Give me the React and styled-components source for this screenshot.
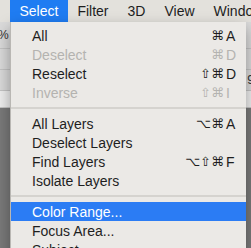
import React from "react"
import styled, { createGlobalStyle } from "styled-components"

const GlobalStyle = createGlobalStyle`
  html, body {
    margin: 0;
    padding: 0;
    width: 251px;
    height: 248px;
    overflow: hidden;
    background: #7a7a7a;
    font-family: "Liberation Sans", Arial, sans-serif;
  }
`

const topItems = ["Select", "Filter", "3D", "View", "Window"]

const groups = [
  [
    { label: "All", mods: "⌘", key: "A" },
    { label: "Deselect", mods: "⌘", key: "D", disabled: true },
    { label: "Reselect", mods: "⇧⌘", key: "D" },
    { label: "Inverse", mods: "⇧⌘", key: "I", disabled: true },
  ],
  [
    { label: "All Layers", mods: "⌥⌘", key: "A" },
    { label: "Deselect Layers" },
    { label: "Find Layers", mods: "⌥⇧⌘", key: "F" },
    { label: "Isolate Layers" },
  ],
  [
    { label: "Color Range...", active: true },
    { label: "Focus Area..." },
    { label: "Subject" },
  ],
]

const App = () => (
  <Screen>
    <GlobalStyle />
    <MenuBar>
      {topItems.map((t, i) => (
        <MenuTitle key={t} active={i === 0}>{t}</MenuTitle>
      ))}
    </MenuBar>
    <Workspace>
      <OptionsBar>
        <OptionRow tall>
          <EdgeText>%</EdgeText>
          <EdgeText right>:</EdgeText>
        </OptionRow>
        <OptionRow />
        <OptionRow>
          <span />
          <EdgeText right>9</EdgeText>
        </OptionRow>
        <OptionRow light />
      </OptionsBar>
      <Canvas />

      <Dropdown>
        {groups.map((group, gi) => (
          <React.Fragment key={gi}>
            {gi > 0 && <Separator />}
            {group.map((item) => (
              <Item key={item.label} disabled={item.disabled} active={item.active}>
                <Label>{item.label}</Label>
                <Mods>{item.mods}</Mods>
                <Key>{item.key}</Key>
              </Item>
            ))}
          </React.Fragment>
        ))}
      </Dropdown>
    </Workspace>
  </Screen>
)

const Screen = styled.div`
  width: 251px;
  height: 248px;
  display: flex;
  flex-direction: column;
  overflow: hidden;
`

const MenuBar = styled.div`
  height: 22px;
  flex: none;
  display: flex;
  align-items: stretch;
  padding-left: 10px;
  background: #e3e1dc;
  white-space: nowrap;
`

const MenuTitle = styled.div`
  display: flex;
  align-items: center;
  padding: 0 9.5px;
  font-size: 14px;
  color: ${(p) => (p.active ? "#fff" : "#1e1e1e")};
  background: ${(p) => (p.active ? "#1f7cf2" : "transparent")};
`

const Workspace = styled.div`
  position: relative;
  flex: 1;
  display: flex;
  flex-direction: column;
`

const OptionsBar = styled.div`
  height: 86px;
  display: flex;
  flex-direction: column;
  background: #dcdcdc;
`

const OptionRow = styled.div`
  height: ${(p) => (p.tall ? "26px" : "20px")};
  flex: ${(p) => (p.light ? 1 : "none")};
  display: flex;
  justify-content: space-between;
  align-items: center;
  border-bottom: 1px solid #c4c4c4;
  background: ${(p) => (p.light ? "#eeeeee" : "#dadada")};
  font-size: 12px;
  color: #333;
`

const EdgeText = styled.span`
  margin: ${(p) => (p.right ? "0 -3px 0 0" : "0 0 0 -2px")};
`

const Canvas = styled.div`
  flex: 1;
  background: #7a7a7a;
`

const Dropdown = styled.div`
  position: absolute;
  top: 0;
  left: 10px;
  width: 236px;
  padding-top: 4px;
  background: #ebe9e6;
  border-left: 1px solid #b9b7b3;
  box-shadow: 0 6px 14px rgba(0, 0, 0, 0.35);
  box-sizing: border-box;
`

const Item = styled.div`
  height: 19px;
  display: grid;
  grid-template-columns: 1fr auto 11px;
  align-items: center;
  padding: 0 9px 0 21px;
  font-size: 14px;
  color: ${(p) => (p.active ? "#fff" : p.disabled ? "#b4b3b0" : "#1e1e1e")};
  background: ${(p) => (p.active ? "#2b7cf4" : "transparent")};
  white-space: nowrap;
`

const Label = styled.span``

const Mods = styled.span`
  font-family: "DejaVu Sans", sans-serif;
  font-size: 13px;
  text-align: right;
  padding-right: 2px;
`

const Key = styled.span`
  font-size: 14px;
`

const Separator = styled.div`
  height: 12px;
  display: flex;
  align-items: center;
  &::after {
    content: "";
    flex: 1;
    height: 2px;
    background: #d5d3cf;
  }
`

export default App
